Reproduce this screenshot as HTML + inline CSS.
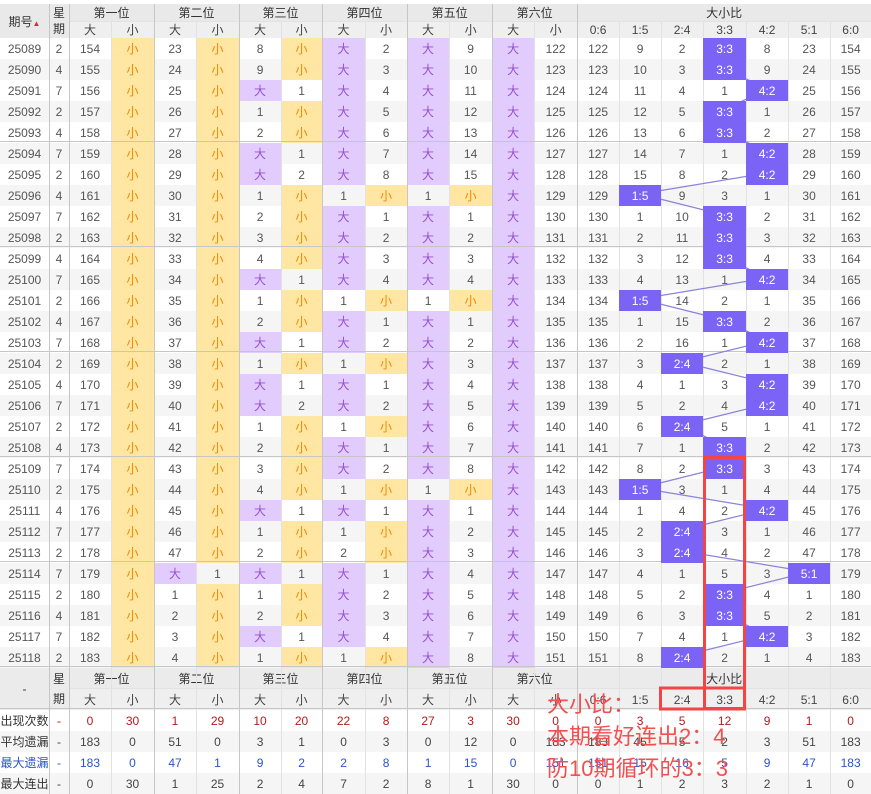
<!DOCTYPE html>
<html><head><meta charset="utf-8"><style>
body{margin:0;width:871px;height:794px;overflow:hidden;background:#fff;position:relative;font-family:"Liberation Sans","Noto Sans CJK SC",sans-serif;}
table{position:absolute;left:0;top:4px;border-collapse:collapse;table-layout:fixed;width:871px;font-size:12px;color:#555;}
td{padding:0;text-align:center;white-space:nowrap;overflow:hidden;}
tr.d td{height:21px;}
tr.d:nth-child(even) td{background:#f5f5f5;}
tr.d:nth-child(odd) td{background:#fff;}
.hd td{background:#e9e9e9;color:#333;height:17px;}
.hd2 td{background:#efefef;color:#444;height:16px;}
.bh td{background:#ebebeb;color:#333;height:21px;}
.bh2 td{background:#efefef;color:#444;height:21px;}
tr.d td.x{background:#ffe6a3;color:#f08800;}
tr.d td.g{background:#e2cbfd;color:#9650cf;}
tr.d td.h{background:#7a63f5;color:#fff;position:relative;z-index:2;}
tr.s td{height:21px;}
tr.s:nth-child(even) td{background:#f5f5f5;}
.r td{color:#b01c1c;} .b td{color:#2a55c8;} .k td{color:#444;}
.r td.l,.k td.l{color:#333;} .b td.l{color:#2a55c8;}
.r td.m{color:#d00;}
svg{position:absolute;left:0;top:0;}
.tip{position:absolute;left:547px;top:689px;color:#f24f4f;font-size:22px;line-height:32px;z-index:5;}
</style></head><body>
<table>
<colgroup><col style="width:49px"><col style="width:20px"><col style="width:42px"><col style="width:43px"><col style="width:42px"><col style="width:43px"><col style="width:42px"><col style="width:41px"><col style="width:43px"><col style="width:42px"><col style="width:42px"><col style="width:43px"><col style="width:42px"><col style="width:43px"><col style="width:42px"><col style="width:42px"><col style="width:42px"><col style="width:43px"><col style="width:42px"><col style="width:42px"><col style="width:41px"></colgroup>
<tr class="hd"><td rowspan="2" style="font-size:12px">期号<span style="color:#c33;font-size:8px">▲</span></td><td rowspan="2" style="line-height:16px">星<br>期</td><td colspan="2">第一位</td><td colspan="2">第二位</td><td colspan="2">第三位</td><td colspan="2">第四位</td><td colspan="2">第五位</td><td colspan="2">第六位</td><td colspan="7">大小比</td></tr>
<tr class="hd2"><td>大</td><td>小</td><td>大</td><td>小</td><td>大</td><td>小</td><td>大</td><td>小</td><td>大</td><td>小</td><td>大</td><td>小</td><td>0:6</td><td>1:5</td><td>2:4</td><td>3:3</td><td>4:2</td><td>5:1</td><td>6:0</td></tr>
<tr class="d"><td>25089</td><td>2</td><td>154</td><td class="x">小</td><td>23</td><td class="x">小</td><td>8</td><td class="x">小</td><td class="g">大</td><td>2</td><td class="g">大</td><td>9</td><td class="g">大</td><td>122</td><td>122</td><td>9</td><td>2</td><td class="h">3:3</td><td>8</td><td>23</td><td>154</td></tr>
<tr class="d"><td>25090</td><td>4</td><td>155</td><td class="x">小</td><td>24</td><td class="x">小</td><td>9</td><td class="x">小</td><td class="g">大</td><td>3</td><td class="g">大</td><td>10</td><td class="g">大</td><td>123</td><td>123</td><td>10</td><td>3</td><td class="h">3:3</td><td>9</td><td>24</td><td>155</td></tr>
<tr class="d"><td>25091</td><td>7</td><td>156</td><td class="x">小</td><td>25</td><td class="x">小</td><td class="g">大</td><td>1</td><td class="g">大</td><td>4</td><td class="g">大</td><td>11</td><td class="g">大</td><td>124</td><td>124</td><td>11</td><td>4</td><td>1</td><td class="h">4:2</td><td>25</td><td>156</td></tr>
<tr class="d"><td>25092</td><td>2</td><td>157</td><td class="x">小</td><td>26</td><td class="x">小</td><td>1</td><td class="x">小</td><td class="g">大</td><td>5</td><td class="g">大</td><td>12</td><td class="g">大</td><td>125</td><td>125</td><td>12</td><td>5</td><td class="h">3:3</td><td>1</td><td>26</td><td>157</td></tr>
<tr class="d"><td>25093</td><td>4</td><td>158</td><td class="x">小</td><td>27</td><td class="x">小</td><td>2</td><td class="x">小</td><td class="g">大</td><td>6</td><td class="g">大</td><td>13</td><td class="g">大</td><td>126</td><td>126</td><td>13</td><td>6</td><td class="h">3:3</td><td>2</td><td>27</td><td>158</td></tr>
<tr class="d"><td>25094</td><td>7</td><td>159</td><td class="x">小</td><td>28</td><td class="x">小</td><td class="g">大</td><td>1</td><td class="g">大</td><td>7</td><td class="g">大</td><td>14</td><td class="g">大</td><td>127</td><td>127</td><td>14</td><td>7</td><td>1</td><td class="h">4:2</td><td>28</td><td>159</td></tr>
<tr class="d"><td>25095</td><td>2</td><td>160</td><td class="x">小</td><td>29</td><td class="x">小</td><td class="g">大</td><td>2</td><td class="g">大</td><td>8</td><td class="g">大</td><td>15</td><td class="g">大</td><td>128</td><td>128</td><td>15</td><td>8</td><td>2</td><td class="h">4:2</td><td>29</td><td>160</td></tr>
<tr class="d"><td>25096</td><td>4</td><td>161</td><td class="x">小</td><td>30</td><td class="x">小</td><td>1</td><td class="x">小</td><td>1</td><td class="x">小</td><td>1</td><td class="x">小</td><td class="g">大</td><td>129</td><td>129</td><td class="h">1:5</td><td>9</td><td>3</td><td>1</td><td>30</td><td>161</td></tr>
<tr class="d"><td>25097</td><td>7</td><td>162</td><td class="x">小</td><td>31</td><td class="x">小</td><td>2</td><td class="x">小</td><td class="g">大</td><td>1</td><td class="g">大</td><td>1</td><td class="g">大</td><td>130</td><td>130</td><td>1</td><td>10</td><td class="h">3:3</td><td>2</td><td>31</td><td>162</td></tr>
<tr class="d"><td>25098</td><td>2</td><td>163</td><td class="x">小</td><td>32</td><td class="x">小</td><td>3</td><td class="x">小</td><td class="g">大</td><td>2</td><td class="g">大</td><td>2</td><td class="g">大</td><td>131</td><td>131</td><td>2</td><td>11</td><td class="h">3:3</td><td>3</td><td>32</td><td>163</td></tr>
<tr class="d"><td>25099</td><td>4</td><td>164</td><td class="x">小</td><td>33</td><td class="x">小</td><td>4</td><td class="x">小</td><td class="g">大</td><td>3</td><td class="g">大</td><td>3</td><td class="g">大</td><td>132</td><td>132</td><td>3</td><td>12</td><td class="h">3:3</td><td>4</td><td>33</td><td>164</td></tr>
<tr class="d"><td>25100</td><td>7</td><td>165</td><td class="x">小</td><td>34</td><td class="x">小</td><td class="g">大</td><td>1</td><td class="g">大</td><td>4</td><td class="g">大</td><td>4</td><td class="g">大</td><td>133</td><td>133</td><td>4</td><td>13</td><td>1</td><td class="h">4:2</td><td>34</td><td>165</td></tr>
<tr class="d"><td>25101</td><td>2</td><td>166</td><td class="x">小</td><td>35</td><td class="x">小</td><td>1</td><td class="x">小</td><td>1</td><td class="x">小</td><td>1</td><td class="x">小</td><td class="g">大</td><td>134</td><td>134</td><td class="h">1:5</td><td>14</td><td>2</td><td>1</td><td>35</td><td>166</td></tr>
<tr class="d"><td>25102</td><td>4</td><td>167</td><td class="x">小</td><td>36</td><td class="x">小</td><td>2</td><td class="x">小</td><td class="g">大</td><td>1</td><td class="g">大</td><td>1</td><td class="g">大</td><td>135</td><td>135</td><td>1</td><td>15</td><td class="h">3:3</td><td>2</td><td>36</td><td>167</td></tr>
<tr class="d"><td>25103</td><td>7</td><td>168</td><td class="x">小</td><td>37</td><td class="x">小</td><td class="g">大</td><td>1</td><td class="g">大</td><td>2</td><td class="g">大</td><td>2</td><td class="g">大</td><td>136</td><td>136</td><td>2</td><td>16</td><td>1</td><td class="h">4:2</td><td>37</td><td>168</td></tr>
<tr class="d"><td>25104</td><td>2</td><td>169</td><td class="x">小</td><td>38</td><td class="x">小</td><td>1</td><td class="x">小</td><td>1</td><td class="x">小</td><td class="g">大</td><td>3</td><td class="g">大</td><td>137</td><td>137</td><td>3</td><td class="h">2:4</td><td>2</td><td>1</td><td>38</td><td>169</td></tr>
<tr class="d"><td>25105</td><td>4</td><td>170</td><td class="x">小</td><td>39</td><td class="x">小</td><td class="g">大</td><td>1</td><td class="g">大</td><td>1</td><td class="g">大</td><td>4</td><td class="g">大</td><td>138</td><td>138</td><td>4</td><td>1</td><td>3</td><td class="h">4:2</td><td>39</td><td>170</td></tr>
<tr class="d"><td>25106</td><td>7</td><td>171</td><td class="x">小</td><td>40</td><td class="x">小</td><td class="g">大</td><td>2</td><td class="g">大</td><td>2</td><td class="g">大</td><td>5</td><td class="g">大</td><td>139</td><td>139</td><td>5</td><td>2</td><td>4</td><td class="h">4:2</td><td>40</td><td>171</td></tr>
<tr class="d"><td>25107</td><td>2</td><td>172</td><td class="x">小</td><td>41</td><td class="x">小</td><td>1</td><td class="x">小</td><td>1</td><td class="x">小</td><td class="g">大</td><td>6</td><td class="g">大</td><td>140</td><td>140</td><td>6</td><td class="h">2:4</td><td>5</td><td>1</td><td>41</td><td>172</td></tr>
<tr class="d"><td>25108</td><td>4</td><td>173</td><td class="x">小</td><td>42</td><td class="x">小</td><td>2</td><td class="x">小</td><td class="g">大</td><td>1</td><td class="g">大</td><td>7</td><td class="g">大</td><td>141</td><td>141</td><td>7</td><td>1</td><td class="h">3:3</td><td>2</td><td>42</td><td>173</td></tr>
<tr class="d"><td>25109</td><td>7</td><td>174</td><td class="x">小</td><td>43</td><td class="x">小</td><td>3</td><td class="x">小</td><td class="g">大</td><td>2</td><td class="g">大</td><td>8</td><td class="g">大</td><td>142</td><td>142</td><td>8</td><td>2</td><td class="h">3:3</td><td>3</td><td>43</td><td>174</td></tr>
<tr class="d"><td>25110</td><td>2</td><td>175</td><td class="x">小</td><td>44</td><td class="x">小</td><td>4</td><td class="x">小</td><td>1</td><td class="x">小</td><td>1</td><td class="x">小</td><td class="g">大</td><td>143</td><td>143</td><td class="h">1:5</td><td>3</td><td>1</td><td>4</td><td>44</td><td>175</td></tr>
<tr class="d"><td>25111</td><td>4</td><td>176</td><td class="x">小</td><td>45</td><td class="x">小</td><td class="g">大</td><td>1</td><td class="g">大</td><td>1</td><td class="g">大</td><td>1</td><td class="g">大</td><td>144</td><td>144</td><td>1</td><td>4</td><td>2</td><td class="h">4:2</td><td>45</td><td>176</td></tr>
<tr class="d"><td>25112</td><td>7</td><td>177</td><td class="x">小</td><td>46</td><td class="x">小</td><td>1</td><td class="x">小</td><td>1</td><td class="x">小</td><td class="g">大</td><td>2</td><td class="g">大</td><td>145</td><td>145</td><td>2</td><td class="h">2:4</td><td>3</td><td>1</td><td>46</td><td>177</td></tr>
<tr class="d"><td>25113</td><td>2</td><td>178</td><td class="x">小</td><td>47</td><td class="x">小</td><td>2</td><td class="x">小</td><td>2</td><td class="x">小</td><td class="g">大</td><td>3</td><td class="g">大</td><td>146</td><td>146</td><td>3</td><td class="h">2:4</td><td>4</td><td>2</td><td>47</td><td>178</td></tr>
<tr class="d"><td>25114</td><td>7</td><td>179</td><td class="x">小</td><td class="g">大</td><td>1</td><td class="g">大</td><td>1</td><td class="g">大</td><td>1</td><td class="g">大</td><td>4</td><td class="g">大</td><td>147</td><td>147</td><td>4</td><td>1</td><td>5</td><td>3</td><td class="h">5:1</td><td>179</td></tr>
<tr class="d"><td>25115</td><td>2</td><td>180</td><td class="x">小</td><td>1</td><td class="x">小</td><td>1</td><td class="x">小</td><td class="g">大</td><td>2</td><td class="g">大</td><td>5</td><td class="g">大</td><td>148</td><td>148</td><td>5</td><td>2</td><td class="h">3:3</td><td>4</td><td>1</td><td>180</td></tr>
<tr class="d"><td>25116</td><td>4</td><td>181</td><td class="x">小</td><td>2</td><td class="x">小</td><td>2</td><td class="x">小</td><td class="g">大</td><td>3</td><td class="g">大</td><td>6</td><td class="g">大</td><td>149</td><td>149</td><td>6</td><td>3</td><td class="h">3:3</td><td>5</td><td>2</td><td>181</td></tr>
<tr class="d"><td>25117</td><td>7</td><td>182</td><td class="x">小</td><td>3</td><td class="x">小</td><td class="g">大</td><td>1</td><td class="g">大</td><td>4</td><td class="g">大</td><td>7</td><td class="g">大</td><td>150</td><td>150</td><td>7</td><td>4</td><td>1</td><td class="h">4:2</td><td>3</td><td>182</td></tr>
<tr class="d"><td>25118</td><td>2</td><td>183</td><td class="x">小</td><td>4</td><td class="x">小</td><td>1</td><td class="x">小</td><td>1</td><td class="x">小</td><td class="g">大</td><td>8</td><td class="g">大</td><td>151</td><td>151</td><td>8</td><td class="h">2:4</td><td>2</td><td>1</td><td>4</td><td>183</td></tr>
<tr class="bh"><td rowspan="2">-</td><td rowspan="2" style="line-height:20px">星<br>期</td><td colspan="2">第一位</td><td colspan="2">第二位</td><td colspan="2">第三位</td><td colspan="2">第四位</td><td colspan="2">第五位</td><td colspan="2">第六位</td><td colspan="7">大小比</td></tr>
<tr class="bh2"><td>大</td><td>小</td><td>大</td><td>小</td><td>大</td><td>小</td><td>大</td><td>小</td><td>大</td><td>小</td><td>大</td><td>小</td><td>0:6</td><td>1:5</td><td>2:4</td><td>3:3</td><td>4:2</td><td>5:1</td><td>6:0</td></tr>
<tr class="s r"><td class="l">出现次数</td><td class="m">-</td><td>0</td><td>30</td><td>1</td><td>29</td><td>10</td><td>20</td><td>22</td><td>8</td><td>27</td><td>3</td><td>30</td><td>0</td><td>0</td><td>3</td><td>5</td><td>12</td><td>9</td><td>1</td><td>0</td></tr>
<tr class="s k"><td class="l">平均遗漏</td><td>-</td><td>183</td><td>0</td><td>51</td><td>0</td><td>3</td><td>1</td><td>0</td><td>3</td><td>0</td><td>12</td><td>0</td><td>183</td><td>183</td><td>45</td><td>5</td><td>2</td><td>3</td><td>51</td><td>183</td></tr>
<tr class="s b"><td class="l">最大遗漏</td><td>-</td><td>183</td><td>0</td><td>47</td><td>1</td><td>9</td><td>2</td><td>2</td><td>8</td><td>1</td><td>15</td><td>0</td><td>151</td><td>151</td><td>15</td><td>16</td><td>5</td><td>9</td><td>47</td><td>183</td></tr>
<tr class="s k"><td class="l">最大连出</td><td>-</td><td>0</td><td>30</td><td>1</td><td>25</td><td>2</td><td>4</td><td>7</td><td>2</td><td>8</td><td>1</td><td>30</td><td>0</td><td>0</td><td>1</td><td>2</td><td>3</td><td>2</td><td>1</td><td>0</td></tr>
</table>
<svg width="871" height="794" style="z-index:1">
<g stroke="#e2e2e2" stroke-width="1">
<line x1="111.5" y1="21" x2="111.5" y2="794"/><line x1="196.5" y1="21" x2="196.5" y2="794"/><line x1="281.5" y1="21" x2="281.5" y2="794"/><line x1="365.5" y1="21" x2="365.5" y2="794"/><line x1="449.5" y1="21" x2="449.5" y2="794"/><line x1="534.5" y1="21" x2="534.5" y2="794"/><line x1="619.5" y1="21" x2="619.5" y2="794"/><line x1="661.5" y1="21" x2="661.5" y2="794"/><line x1="703.5" y1="21" x2="703.5" y2="794"/><line x1="746.5" y1="21" x2="746.5" y2="794"/><line x1="788.5" y1="21" x2="788.5" y2="794"/><line x1="830.5" y1="21" x2="830.5" y2="794"/>
<line x1="69" y1="21.5" x2="871" y2="21.5"/><line x1="69" y1="688.5" x2="871" y2="688.5"/>
</g>
<g stroke="#c6c6c6" stroke-width="1">
<line x1="49.5" y1="4" x2="49.5" y2="794"/><line x1="69.5" y1="4" x2="69.5" y2="794"/><line x1="154.5" y1="4" x2="154.5" y2="794"/><line x1="239.5" y1="4" x2="239.5" y2="794"/><line x1="322.5" y1="4" x2="322.5" y2="794"/><line x1="407.5" y1="4" x2="407.5" y2="794"/><line x1="492.5" y1="4" x2="492.5" y2="794"/><line x1="577.5" y1="4" x2="577.5" y2="794"/>
<line x1="0" y1="141.5" x2="871" y2="141.5"/><line x1="0" y1="246.5" x2="871" y2="246.5"/><line x1="0" y1="351.5" x2="871" y2="351.5"/><line x1="0" y1="456.5" x2="871" y2="456.5"/><line x1="0" y1="561.5" x2="871" y2="561.5"/><line x1="0" y1="666.5" x2="871" y2="666.5"/><line x1="0" y1="708.5" x2="871" y2="708.5"/>
</g>
<polyline fill="none" stroke="#8a84d8" stroke-width="1.2" points="724,47 724,68 767,89 724,110 724,131 767,152 767,173 640,194 724,215 724,236 724,257 767,278 640,299 724,320 767,341 682,362 767,383 767,404 682,425 724,446 724,467 640,488 767,509 682,530 682,551 809,572 724,593 724,614 767,635 682,656"/>
</svg>
<svg width="871" height="794" style="z-index:4">
<g fill="none" stroke="#f24646" stroke-width="3">
<rect x="704.5" y="457.5" width="40" height="251"/>
<rect x="660.5" y="688" width="84" height="21"/>
</g>
</svg>
<div class="tip">大小比：<br>本期看好连出2：4<br>防10期循环的3：3</div>
</body></html>
